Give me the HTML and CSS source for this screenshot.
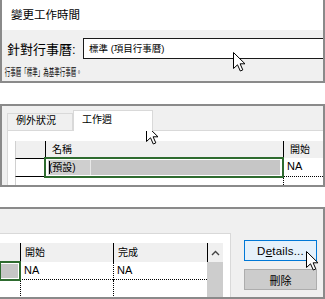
FILE: index.html
```html
<!DOCTYPE html>
<html lang="zh-Hant">
<head>
<meta charset="utf-8">
<title>變更工作時間</title>
<link rel="stylesheet" href="styles.css">
</head>
<body>
<div class="panel p1">
  <div class="p1-head">變更工作時間</div>
  <div class="p1-body">
    <div class="cal-row">
      <span class="cal-label">針對行事曆:</span>
      <div class="cal-input">標準 (項目行事曆)</div>
    </div>
    <div class="hint">行事曆「標準」為基準行事曆。</div>
  </div>
  <svg class="cursor c1" width="13" height="20" viewBox="0 0 13 20"><path d="M0.5 0.5V16.5L4.5 12.8L7.3 19L9.8 17.9L7.1 11.8H12Z" fill="#fff" stroke="#000" stroke-width="1" stroke-linejoin="miter"/></svg>
</div>

<div class="panel p2">
  <div class="tabs">
    <div class="tab">例外狀況</div>
    <div class="tab active">工作週</div>
  </div>
  <div class="tabpane">
    <div class="grid2">
      <div class="hc rh"></div>
      <div class="hc bl">名稱</div>
      <div class="hc bl">開始</div>
      <div class="rc rh rh-data"></div>
      <div class="rc sel"><div class="sel-fill"><span class="edit"><span class="caret"></span>(預設)</span></div></div>
      <div class="rc na dot-b">NA</div>
      <div class="rc rh"></div>
      <div class="rc"></div>
      <div class="rc dot-l"></div>
    </div>
  </div>
  <svg class="cursor c2" width="13" height="20" viewBox="0 0 13 20"><path d="M0.5 0.5V16.5L4.5 12.8L7.3 19L9.8 17.9L7.1 11.8H12Z" fill="#fff" stroke="#000" stroke-width="1"/></svg>
</div>

<div class="panel p3">
  <div class="p3-pane">
    <div class="grid3">
      <div class="hc"></div>
      <div class="hc bl">開始</div>
      <div class="hc bl">完成</div>
      <div class="hc bl sb-up"><svg width="9" height="6" viewBox="0 0 9 6"><path d="M1 5L4.5 1.5L8 5" fill="none" stroke="#444" stroke-width="1.4"/></svg></div>
      <div class="rc3 sel3"><div class="sel-fill3"></div></div>
      <div class="rc3 na dot-b">NA</div>
      <div class="rc3 na dot-b dot-l">NA</div>
      <div class="sb-track"></div>
      <div class="rc3 tall"></div>
      <div class="rc3 tall dot-l"></div>
      <div class="rc3 tall dot-l"></div>
    </div>
  </div>
  <div class="p3-btns">
    <button class="btn primary">D<u>e</u>tails...</button>
    <button class="btn gray">刪除</button>
  </div>
  <svg class="cursor c3" width="13" height="20" viewBox="0 0 13 20"><path d="M0.5 0.5V16.5L4.5 12.8L7.3 19L9.8 17.9L7.1 11.8H12Z" fill="#fff" stroke="#000" stroke-width="1"/></svg>
</div>
</body>
</html>
```

FILE: styles.css
```css
* { box-sizing: border-box; }
html, body { margin: 0; padding: 0; background: #fff; }
body {
  width: 325px;
  height: 299px;
  overflow: hidden;
  font-family: "Liberation Sans", "Noto Sans CJK TC", sans-serif;
  color: #000;
}

.panel {
  position: relative;
  border: 2px solid #8a8a8a;
  background: #f0f0f0;
  overflow: hidden;
}

.cursor { position: absolute; }

/* Panel 1 */
.p1 {
  border-top: none;
  height: 83px;
  display: flex;
  flex-direction: column;
}
.p1-head {
  height: 30px;
  background: #fff;
  font-size: 11.5px;
  line-height: 30px;
  padding-left: 9px;
}
.p1-body { flex: 1; padding-top: 8px; }
.cal-row { display: flex; align-items: center; height: 21px; padding-left: 5px; }
.cal-label { font-size: 13px; width: 76px; white-space: nowrap; }
.cal-input {
  flex: 1;
  height: 21px;
  background: #fff;
  border: 1px solid #1a1a1a;
  border-right: none;
  font-size: 9.5px;
  line-height: 19px;
  padding-left: 5px;
  white-space: nowrap;
}
.hint {
  margin-top: 9px;
  padding-left: 5px;
  font-size: 10px;
  line-height: 10px;
  white-space: nowrap;
  transform: scaleX(0.55);
  transform-origin: left center;
}
.c1 { left: 231px; top: 52px; }

/* Panel 2 */
.p2 { margin-top: 21px; height: 83px; }
.tabs {
  display: flex;
  align-items: flex-end;
  height: 24px;
  padding-left: 5px;
  position: relative;
  z-index: 1;
}
.tab {
  height: 17px;
  width: 66px;
  border: 1px solid #d9d9d9;
  border-bottom: none;
  background: #f0f0f0;
  font-size: 10px;
  line-height: 13px;
  padding-left: 8px;
}
.tab.active {
  height: 21px;
  width: 80px;
  background: #fff;
  margin-bottom: -1px;
  line-height: 17px;
}
.tabpane {
  margin-left: 5px;
  height: 55px;
  background: #fff;
  border-top: 1px solid #d9d9d9;
  border-left: 1px solid #d9d9d9;
  padding: 10px 0 0 7px;
  overflow: hidden;
}
.grid2 {
  display: grid;
  grid-template-columns: 30px 238px 1fr;
  grid-template-rows: 17px 19px 20px;
}
.hc {
  background: #f0f0f0;
  font-size: 10px;
  line-height: 17px;
  padding-left: 6px;
  white-space: nowrap;
}
.hc.rh { border-left: 1px solid #d0d0d0; }
.bl { border-left: 1px solid #000; }
.rc { background: #fff; font-size: 11px; }
.rh { border-left: 1px solid #d0d0d0; }
.rh-data { border-top: 1px solid #000; border-bottom: 1px solid #000; }
.sel {
  position: relative;
  z-index: 2;
  border-left: 1px solid #000;
  outline: 2px solid #2e6b2f;
  outline-offset: -1px;
  padding: 2px 3px 2px 2px;
}
.sel-fill {
  height: 100%;
  background: #c6c6c6;
  font-size: 10px;
  line-height: 15px;
}
.edit {
  display: inline-block;
  position: relative;
  width: 43px;
  height: 15px;
  background: #cfcfcf;
  border-right: 1px solid #e8e8e8;
  padding-left: 1px;
}
.caret {
  position: absolute;
  left: 1px;
  top: 1px;
  width: 1px;
  height: 13px;
  background: #000;
}
.na {
  padding-left: 3px;
  line-height: 17px;
  font-size: 11px;
  border-left: 1px solid #000;
}
.dot-b { border-bottom: 1px dotted #000; }
.dot-l { border-left: 1px dotted #000; }
.c2 { left: 144px; top: 19px; }

/* Panel 3 */
.p3 {
  margin-top: 20px;
  height: 92px;
  border-left: none;
  display: flex;
  align-items: flex-start;
}
.p3-pane {
  width: 231px;
  height: 70px;
  margin-top: 24px;
  background: #fff;
  border-top: 1px solid #d9d9d9;
  border-right: 1px solid #d9d9d9;
  padding-top: 9px;
  overflow: hidden;
}
.grid3 {
  display: grid;
  grid-template-columns: 20px 93px 94px 16px;
  grid-template-rows: 19px 18px 30px;
}
.grid3 .hc { line-height: 19px; padding-left: 4px; }
.sb-up { display: flex; align-items: center; justify-content: center; padding-left: 0 !important; }
.rc3 { background: #fff; font-size: 11px; }
.grid3 .na { border-left: 1px solid #000; line-height: 17px; }
.grid3 .na.dot-l { border-left: 1px dotted #000; }
.sel3 {
  position: relative;
  z-index: 2;
  outline: 2px solid #2e6b2f;
  outline-offset: -1px;
  padding: 2px 2px 2px 0;
}
.sel-fill3 { height: 100%; background: #c6c6c6; }
.sb-track {
  grid-row: 2 / span 2;
  grid-column: 4;
  background: #cdcdcd;
}
.tall { height: 30px; }
.p3-btns {
  margin-left: 13px;
  margin-top: 31px;
  display: flex;
  flex-direction: column;
  gap: 8px;
}
.btn {
  width: 73px;
  height: 21px;
  margin: 0;
  padding: 0;
  font-family: "Liberation Sans", "Noto Sans CJK TC", sans-serif;
  color: #000;
}
.btn.primary {
  border: 1px solid #0078d7;
  background: #e5f1fb;
  font-size: 11.5px;
  letter-spacing: 0.2px;
}
.btn.gray {
  border: 1px solid #adadad;
  background: #cccccc;
  font-size: 11px;
}
.c3 { left: 306px; top: 42px; }
```
